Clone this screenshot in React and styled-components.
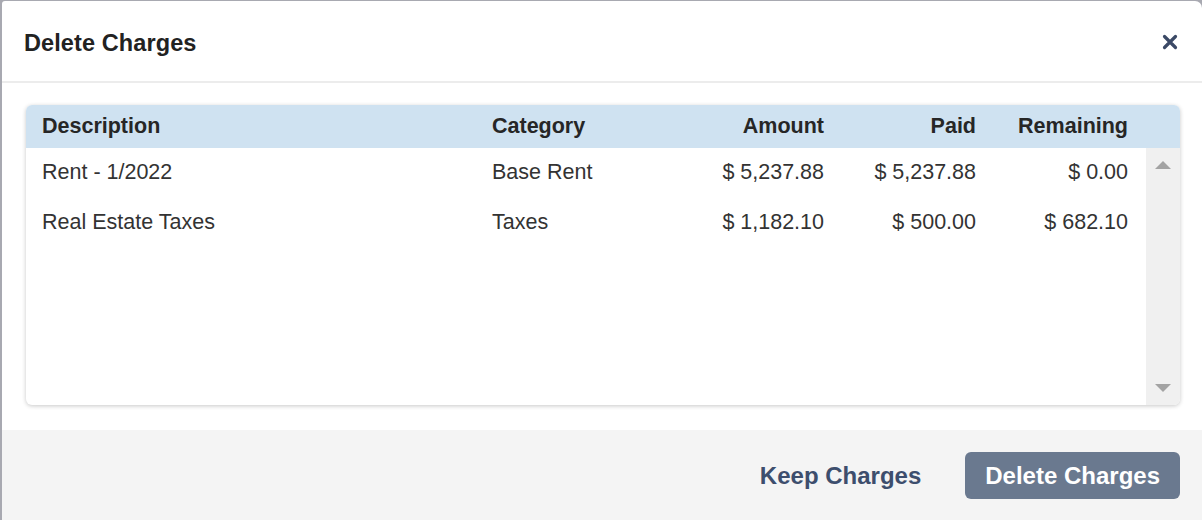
import React from "react";
import styled, { createGlobalStyle } from "styled-components";

const charges = [
  { description: "Rent - 1/2022", category: "Base Rent", amount: "$ 5,237.88", paid: "$ 5,237.88", remaining: "$ 0.00" },
  { description: "Real Estate Taxes", category: "Taxes", amount: "$ 1,182.10", paid: "$ 500.00", remaining: "$ 682.10" },
];

function App() {
  return (
    <>
      <GlobalStyle />
      <Overlay>
        <Modal>
          <Header>
            <Title>Delete Charges</Title>
            <CloseBtn aria-label="Close">
              <svg width="16" height="16" viewBox="0 0 16 16">
                <path d="M2.5 2.5 L13.5 13.5 M13.5 2.5 L2.5 13.5" stroke="#3b4966" strokeWidth="3.2" strokeLinecap="round" />
              </svg>
            </CloseBtn>
          </Header>
          <Body>
            <Card>
              <HeadRow>
                <HeadCell>Description</HeadCell>
                <HeadCell>Category</HeadCell>
                <HeadCell $right>Amount</HeadCell>
                <HeadCell $right>Paid</HeadCell>
                <HeadCell $right>Remaining</HeadCell>
              </HeadRow>
              <Scroller>
                <Rows>
                  {charges.map((c) => (
                    <Row key={c.description}>
                      <Cell>{c.description}</Cell>
                      <Cell>{c.category}</Cell>
                      <Cell $right>{c.amount}</Cell>
                      <Cell $right>{c.paid}</Cell>
                      <Cell $right>{c.remaining}</Cell>
                    </Row>
                  ))}
                </Rows>
                <ScrollTrack>
                  <Arrow />
                  <Arrow $down />
                </ScrollTrack>
              </Scroller>
            </Card>
          </Body>
          <Footer>
            <KeepBtn>Keep Charges</KeepBtn>
            <DeleteBtn>Delete Charges</DeleteBtn>
          </Footer>
        </Modal>
      </Overlay>
    </>
  );
}

export default App;

const GlobalStyle = createGlobalStyle`
  html, body {
    margin: 0;
    padding: 0;
    background: #a8a9b1;
    font-family: "Liberation Sans", Arial, sans-serif;
  }
`;

const Overlay = styled.div`
  height: 520px;
  overflow: hidden;
  padding: 1px 0 0 2px;
  box-sizing: border-box;
`;

const Modal = styled.div`
  background: #fff;
  border-radius: 3px 7px 0 0;
  height: 519px;
  display: flex;
  flex-direction: column;
  overflow: hidden;
`;

const Header = styled.div`
  height: 82px;
  flex-shrink: 0;
  box-sizing: border-box;
  display: flex;
  align-items: center;
  justify-content: space-between;
  padding: 5px 22px 0 22px;
  border-bottom: 2px solid #ececec;
`;

const Title = styled.h2`
  margin: 0;
  font-size: 23.5px;
  font-weight: 700;
  color: #222;
  letter-spacing: 0.1px;
`;

const CloseBtn = styled.button`
  border: none;
  background: none;
  padding: 0;
  width: 20px;
  height: 20px;
  display: flex;
  align-items: center;
  justify-content: center;
  margin-top: -4px;
`;

const Body = styled.div`
  padding: 22px 22px 25px 24px;
`;

const Card = styled.div`
  border-radius: 6px;
  box-shadow: 0 1px 4px rgba(0, 0, 0, 0.22);
  overflow: hidden;
  height: 300px;
  display: flex;
  flex-direction: column;
`;

const columns = "450px 180px 152px 152px 152px";

const HeadRow = styled.div`
  background: #cfe2f1;
  height: 43px;
  display: grid;
  grid-template-columns: ${columns};
  align-items: center;
  padding-left: 16px;
`;

const HeadCell = styled.div`
  font-size: 21.5px;
  font-weight: 700;
  color: #262626;
  text-align: ${(p) => (p.$right ? "right" : "left")};
`;

const Scroller = styled.div`
  flex: 1;
  display: flex;
`;

const Rows = styled.div`
  flex: 1;
  padding-left: 16px;
`;

const Row = styled.div`
  height: 50px;
  display: grid;
  grid-template-columns: ${columns};
  align-items: center;
`;

const Cell = styled.div`
  font-size: 21.5px;
  color: #333;
  text-align: ${(p) => (p.$right ? "right" : "left")};
  margin-top: -2px;
`;

const ScrollTrack = styled.div`
  width: 34px;
  background: #f0f0f0;
  display: flex;
  flex-direction: column;
  justify-content: space-between;
  align-items: center;
  padding: 13px 0 13px;
`;

const Arrow = styled.div`
  width: 0;
  height: 0;
  border-left: 8px solid transparent;
  border-right: 8px solid transparent;
  ${(p) => (p.$down ? "border-top: 8px solid #a3a3a3;" : "border-bottom: 8px solid #a3a3a3;")}
`;

const Footer = styled.div`
  flex: 1;
  background: #f4f4f4;
  display: flex;
  justify-content: flex-end;
  align-items: flex-start;
  padding: 22px 22px 0 0;
`;

const KeepBtn = styled.button`
  border: none;
  background: none;
  height: 47px;
  padding: 0 20px;
  margin-right: 24px;
  font-family: inherit;
  font-size: 24px;
  font-weight: 700;
  color: #3d4e6d;
  cursor: pointer;
`;

const DeleteBtn = styled.button`
  border: none;
  background: #6a798f;
  height: 47px;
  padding: 0 20px;
  border-radius: 6px;
  font-family: inherit;
  font-size: 24px;
  font-weight: 700;
  color: #fff;
  cursor: pointer;
`;
